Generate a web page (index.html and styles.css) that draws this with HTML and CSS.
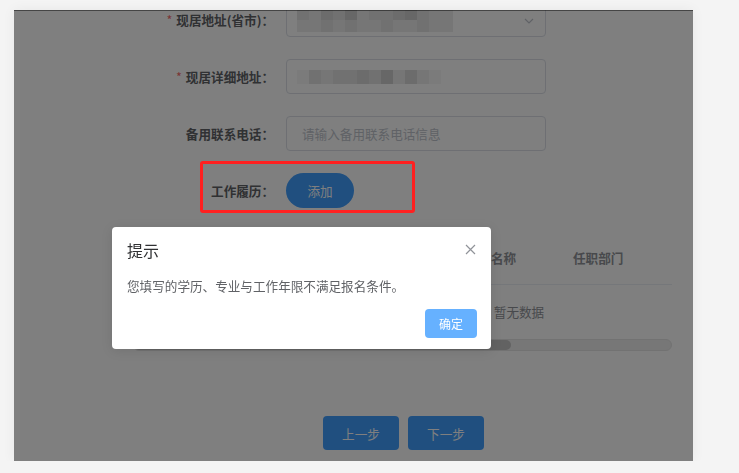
FILE: index.html
```html
<!DOCTYPE html>
<html lang="zh-CN">
<head>
  <meta charset="UTF-8">
  <title>报名信息</title>
  <meta name="viewport" content="width=device-width, initial-scale=1.0">
  <link rel="stylesheet" href="styles.css">
</head>
<body>

  <div class="card">
    <div class="form">
      <div class="form-item">
        <label class="label"><i class="req">*</i>现居地址(省市)：</label>
        <div class="input select">
          <div class="mosaic">
            <div class="mrow"><span class="m2"></span><span class="m1"></span><span class="m3"></span><span class="m2"></span><span class="m4"></span><span class="m1"></span><span class="m2"></span><span class="m2"></span><span class="m3"></span><span class="m4"></span><span class="m2"></span><span class="m1"></span><span class="m1"></span></div>
            <div class="mrow"><span class="m1"></span><span class="m1"></span><span class="m2"></span><span class="m1"></span><span class="m2"></span><span class="m1"></span><span class="m1"></span><span class="m2"></span><span class="m1"></span><span class="m1"></span><span class="m2"></span><span class="m1"></span><span class="m1"></span></div>
          </div>
          <svg class="arrow" width="10" height="6" viewBox="0 0 10 6"><path d="M1 1 L5 5 L9 1" fill="none" stroke="#c0c4cc" stroke-width="1.2"/></svg>
        </div>
      </div>

      <div class="form-item">
        <label class="label"><i class="req">*</i>现居详细地址：</label>
        <div class="input">
          <div class="mosaic">
            <div class="mrow short"><span class="m0"></span><span class="m2"></span><span class="m1"></span><span class="m2"></span><span class="m2"></span><span class="m3"></span><span class="m2"></span><span class="m4"></span><span class="m1"></span><span class="m3"></span><span class="m1"></span><span class="m0"></span></div>
          </div>
        </div>
      </div>

      <div class="form-item">
        <label class="label">备用联系电话：</label>
        <div class="input"><span class="placeholder">请输入备用联系电话信息</span></div>
      </div>

      <div class="form-item">
        <label class="label">工作履历：</label>
        <button class="btn-add">添加</button>
      </div>
    </div>

    <div class="table">
      <div class="table-inner">
        <div class="thead">
          <div class="th"></div>
          <div class="th">名称</div>
          <div class="th">任职部门</div>
        </div>
        <div class="empty">暂无数据</div>
      </div>
      <div class="scrollbar"><div class="thumb"></div></div>
    </div>

    <div class="steps">
      <button class="btn-step">上一步</button>
      <button class="btn-step">下一步</button>
    </div>

    <div class="mask"></div>
  </div>

  <div class="mark"></div>

  <div class="msgbox">
    <div class="msg-header">
      <span class="msg-title">提示</span>
      <svg class="msg-close" width="11" height="11" viewBox="0 0 11 11"><path d="M1 1 L10 10 M10 1 L1 10" stroke="#909399" stroke-width="1.2"/></svg>
    </div>
    <div class="msg-content">您填写的学历、专业与工作年限不满足报名条件。</div>
    <div class="msg-btns"><button class="btn-ok">确定</button></div>
  </div>

</body>
</html>
```

FILE: styles.css
```css
* { margin: 0; padding: 0; box-sizing: border-box; }
body {
  background: #f4f4f4;
  font-family: "Noto Sans CJK SC", "Noto Sans", sans-serif;
  font-size: 12.6px;
  padding: 10px 0 0 14px;
  overflow: hidden;
}
button { font-family: inherit; border: none; cursor: pointer; }

.card {
  position: relative;
  width: 679px;
  height: 451px;
  background: #fff;
  box-shadow: 0 0 12px rgba(0, 0, 0, 0.06);
  overflow: hidden;
}

.form { margin-top: -8px; }
.form-item {
  display: flex;
  align-items: center;
  height: 35px;
  margin-bottom: 22px;
}
.label {
  width: 272px;
  padding-right: 12px;
  text-align: right;
  color: #606266;
  font-weight: bold;
}
.req { color: #f56c6c; font-style: normal; margin-right: 4px; font-weight: normal; }

.input {
  position: relative;
  width: 260px;
  height: 35px;
  border: 1px solid #dcdfe6;
  border-radius: 4px;
  padding: 0 15px;
  display: flex;
  align-items: center;
}
.placeholder { color: #c0c4cc; }
.arrow { position: absolute; right: 11px; top: 15px; }

.mosaic { margin-left: -5px; filter: blur(0.7px); }
.mrow { display: flex; height: 12px; }
.mrow span { width: 12px; height: 12px; }
.m0 { background: #f6f6f6; }
.m1 { background: #ececec; }
.m2 { background: #e2e2e2; }
.m3 { background: #d8d8d8; }
.m4 { background: #cfcfcf; }
.mrow.short { height: 14px; }
.mrow.short span { height: 14px; }

.btn-add {
  width: 68px;
  height: 35px;
  border-radius: 18px;
  background: #409eff;
  color: #fff;
  font-size: 12.6px;
}

.table {
  margin-left: 119px;
  width: 539px;
  overflow: hidden;
}
.table-inner { width: 772px; }
.thead {
  display: grid;
  grid-template-columns: 358px 72px 342px;
  height: 55px;
  align-items: center;
  border-bottom: 1px solid #ebeef5;
  color: #909399;
  font-weight: bold;
}
.thead .th:last-child { padding-left: 10px; }
.empty {
  height: 54px;
  line-height: 54px;
  text-align: center;
  color: #909399;
}
.scrollbar {
  height: 12px;
  border-radius: 6px;
  background: #eeeeee;
  border: 1px solid #e4e4e4;
}
.thumb {
  width: 377px;
  height: 10px;
  border-radius: 6px;
  background: #c4c4c4;
}

.steps {
  display: flex;
  gap: 9px;
  margin-top: 65px;
  padding-left: 309px;
}
.btn-step {
  width: 76px;
  height: 34px;
  border-radius: 4px;
  background: #409eff;
  color: #fff;
  font-size: 12.6px;
}

.mask {
  position: absolute;
  inset: 0;
  background: rgba(0, 0, 0, 0.5);
  border-top: 1px solid rgba(0, 0, 0, 0.45);
}

.mark {
  position: fixed;
  left: 200px;
  top: 161px;
  width: 215px;
  height: 52px;
  border: 3px solid #ff2020;
  border-radius: 3px;
}

.msgbox {
  position: fixed;
  left: 112px;
  top: 227px;
  width: 379px;
  height: 122px;
  background: #fff;
  border-radius: 4px;
  box-shadow: 0 2px 12px rgba(0, 0, 0, 0.1);
}
.msg-header {
  position: relative;
  padding: 15px 15px 10px;
  height: 41px;
}
.msg-title { font-size: 16px; line-height: 16px; color: #303133; display: block; }
.msg-close { position: absolute; right: 15px; top: 17px; }
.msg-content {
  padding: 10px 15px;
  line-height: 16px;
  color: #606266;
}
.msg-btns {
  padding: 5px 14px 0;
  text-align: right;
}
.btn-ok {
  width: 52px;
  height: 29px;
  border-radius: 4px;
  background: #66b1ff;
  color: #fff;
  font-size: 12px;
}
```
